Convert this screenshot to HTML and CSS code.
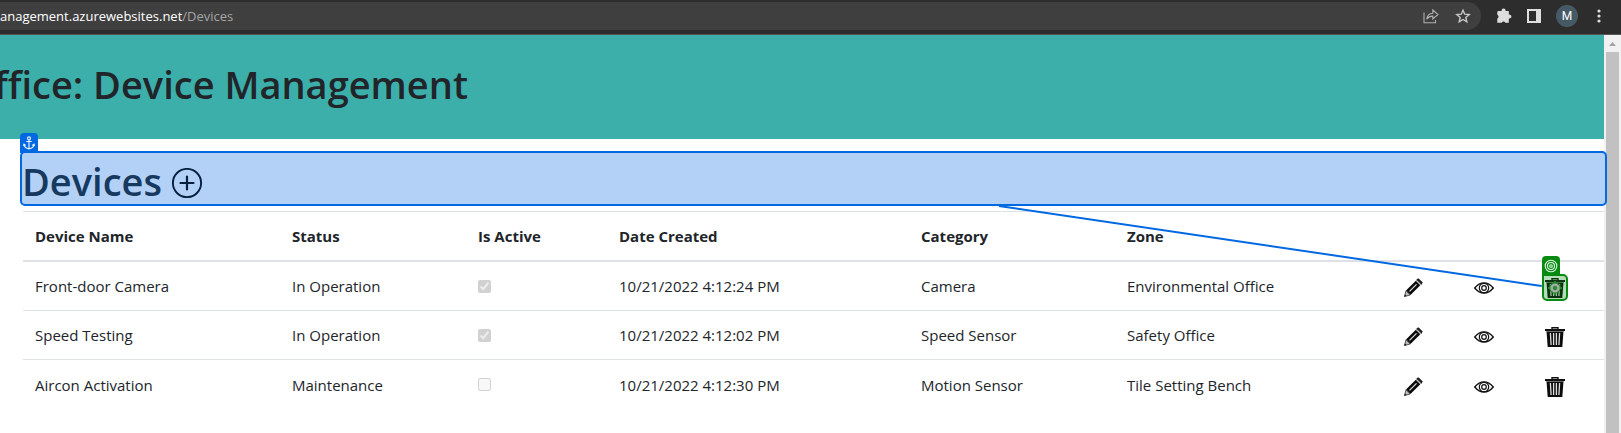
FILE: index.html
```html
<!DOCTYPE html>
<html lang="en">
<head>
<meta charset="utf-8">
<title>Device Management</title>
<link rel="stylesheet" href="styles.css">
</head>
<body>
<svg class="defs" aria-hidden="true">
  <symbol id="pencil" viewBox="0 0 20 20">
    <path d="M3 12.5 12.8 2.7l4.5 4.5L7.500 17z" fill="#0b0b0b"/>
    <path d="M13.600 1.900 15.400.8l3.800 3.800-1.100 1.800z" fill="#222" stroke="#111" stroke-linejoin="round"/>
    <path d="m13.900 2.600 3.500 3.500" stroke="#ccc" stroke-width="1"/>
    <path d="m6.500 13.300 7-7" stroke="#ddd" stroke-width="1.200"/>
    <path d="M3 12.800 1.500 18.500 7.200 17z" fill="#bbb" stroke="#333" stroke-width=".8"/>
    <path d="m1.300 18.700.6-2.300 1.700 1.700z" fill="#111"/>
  </symbol>
  <symbol id="eye" viewBox="0 0 20 20">
    <g fill="none" stroke="#111">
      <path d="M.7 10Q5 4.900 10 4.900T19.300 10Q15 15.100 10 15.100T.7 10z" stroke-width="1.400"/>
      <circle cx="10" cy="10" r="4.700" stroke-width="1.200"/>
      <circle cx="10" cy="10" r="2.300" stroke-width="1.200"/>
    </g>
  </symbol>
  <symbol id="trash" viewBox="0 0 20 20">
    <path d="M7 2V.8h6V2" fill="none" stroke="#111" stroke-width="1.400"/>
    <path d="M0 2h20v2H0z" fill="#111"/>
    <path d="M1.500 4h17l-1.200 16H2.700z" fill="#0b0b0b"/>
    <path d="M1.500 4.500h17" stroke="#888" stroke-width=".8"/>
    <path d="m5.400 6 .7 12M8.600 6v12M11.400 6v12M14.600 6l-.7 12" stroke="#ddd" stroke-width="1.300"/>
  </symbol>
</svg>

<header class="toolbar">
  <div class="omnibox">
    <span class="url">anagement.azurewebsites.net<span class="url-path">/Devices</span></span>
    <button class="tool" aria-label="Share">
      <svg width="16" height="16" viewBox="0 0 16 16" fill="none" stroke="#b0b0b0" stroke-width="1.100"><path d="M1 4.500v10.300h11.500V12M3.700 11.200C4.200 7.500 6.500 5.500 9.800 5.300V2L15 6.500 9.800 11V8.100C7.300 8 5.300 9 3.700 11.200z"/></svg>
    </button>
    <button class="tool" aria-label="Bookmark">
      <svg width="16" height="16" viewBox="0 0 16 16" fill="none" stroke="#c8c8c8" stroke-width="1.400"><path d="m8 2.200 1.700 4 4.500.4-3.400 2.900 1 4.300L8 11.500l-3.800 2.300 1-4.300L1.800 6.600l4.500-.4z"/></svg>
    </button>
  </div>
  <button class="tool" aria-label="Extensions">
    <svg width="16" height="16" viewBox="0 0 16 16" fill="#dedede"><path d="M2.500 3h3.200a2 2 0 1 1 3.800 0h3.300v3.600a2 2 0 1 1 0 3.800v4.300H9.300a2 2 0 0 0-3.600 0H1.300V10.500a2 2 0 0 0 0-3.700V4.200Q1.300 3 2.500 3z"/></svg>
  </button>
  <button class="tool" aria-label="Side panel">
    <svg width="14" height="14" viewBox="0 0 14 14"><path d="M0 0h14v14H0zM2 2v10h7V2z" fill="#dedede" fill-rule="evenodd"/></svg>
  </button>
  <button class="avatar" aria-label="Profile M">M</button>
  <button class="tool" aria-label="Menu">
    <svg width="4" height="14" viewBox="0 0 4 14" fill="#dedede"><circle cx="2" cy="2" r="1.600"/><circle cx="2" cy="7" r="1.600"/><circle cx="2" cy="12" r="1.600"/></svg>
  </button>
</header>

<div class="viewport">
  <main class="page">
    <div class="banner"><h1>ffice: Device Management</h1></div>
    <section class="devices">
      <div class="anchor-box">
        <span class="badge badge-anchor"><svg width="12" height="14" viewBox="0 0 12 14" fill="none" stroke="#e8f2ff" stroke-width="1.200"><circle cx="6" cy="2.300" r="1.500"/><path d="M6 3.800V13M3.200 5.500h5.600M1 8.300c.2 2.700 2 4.200 5 4.500 3-.3 4.800-1.800 5-4.500M.4 10 1 8.200l1.700 1.200M11.600 10 11 8.200 9.300 9.400"/></svg></span>
        <h2>Devices</h2>
        <button class="icon-button" aria-label="Add device"><svg width="30" height="30" viewBox="0 0 30 30" fill="none" stroke="#05203f"><circle cx="15" cy="15" r="14.100" stroke-width="1.900"/><path d="M15 8.500v13M8.500 15h13" stroke-width="2.200" stroke-linecap="round"/></svg></button>
      </div>
      <table>
        <colgroup><col class="c-name"><col class="c-status"><col class="c-active"><col class="c-date"><col class="c-category"><col class="c-zone"><col class="c-action"><col class="c-action"><col class="c-action"></colgroup>
        <thead>
          <tr><th>Device Name</th><th>Status</th><th>Is Active</th><th>Date Created</th><th>Category</th><th>Zone</th><th></th><th></th><th></th></tr>
        </thead>
        <tbody>
          <tr>
            <td>Front-door Camera</td><td>In Operation</td><td><input type="checkbox" aria-label="Front-door Camera is active" checked disabled></td><td>10/21/2022 4:12:24 PM</td><td>Camera</td><td>Environmental Office</td>
            <td class="action"><button class="icon-button" aria-label="Edit"><svg width="20" height="20"><use href="#pencil"/></svg></button></td>
            <td class="action"><button class="icon-button" aria-label="View"><svg width="20" height="20"><use href="#eye"/></svg></button></td>
            <td class="action"><button class="icon-button" aria-label="Delete"><svg width="20" height="20"><use href="#trash"/></svg>
              <span class="target-box"><span class="badge badge-target"><svg width="14" height="14" viewBox="0 0 14 14" fill="none" stroke="#dff5df" stroke-width="1.100"><circle cx="7" cy="7" r="5.800"/><circle cx="7" cy="7" r="3.500"/><circle cx="7" cy="7" r="1.300"/></svg></span>
              <svg width="14" height="14" viewBox="0 0 14 14" fill="none"><path d="M7 0v14M0 7h14" stroke="#1f8a2a" stroke-width="2"/><circle cx="7" cy="7" r="5.200" stroke="#1f8a2a" stroke-width="1.200"/><circle cx="7" cy="7" r="3.400" fill="#2f8a3a" stroke="#a3aea3" stroke-width="2.400"/></svg></span></button></td>
          </tr>
          <tr>
            <td>Speed Testing</td><td>In Operation</td><td><input type="checkbox" aria-label="Speed Testing is active" checked disabled></td><td>10/21/2022 4:12:02 PM</td><td>Speed Sensor</td><td>Safety Office</td>
            <td class="action"><button class="icon-button" aria-label="Edit"><svg width="20" height="20"><use href="#pencil"/></svg></button></td>
            <td class="action"><button class="icon-button" aria-label="View"><svg width="20" height="20"><use href="#eye"/></svg></button></td>
            <td class="action"><button class="icon-button" aria-label="Delete"><svg width="20" height="20"><use href="#trash"/></svg></button></td>
          </tr>
          <tr>
            <td>Aircon Activation</td><td>Maintenance</td><td><input type="checkbox" aria-label="Aircon Activation is active" disabled></td><td>10/21/2022 4:12:30 PM</td><td>Motion Sensor</td><td>Tile Setting Bench</td>
            <td class="action"><button class="icon-button" aria-label="Edit"><svg width="20" height="20"><use href="#pencil"/></svg></button></td>
            <td class="action"><button class="icon-button" aria-label="View"><svg width="20" height="20"><use href="#eye"/></svg></button></td>
            <td class="action"><button class="icon-button" aria-label="Delete"><svg width="20" height="20"><use href="#trash"/></svg></button></td>
          </tr>
        </tbody>
      </table>
      <svg class="connector" viewBox="0 0 100 100" preserveAspectRatio="none" aria-hidden="true"><path d="M0 0 100 100" stroke="#0068e0" stroke-width="2" vector-effect="non-scaling-stroke"/></svg>
    </section>
  </main>
  <div class="scrollbar" aria-hidden="true">
    <svg width="7" height="4" viewBox="0 0 7 4"><path d="M0 4 3.500 0 7 4z" fill="#a3a3a3"/></svg>
    <div class="thumb"></div>
  </div>
</div>
</body>
</html>
```
FILE: styles.css
```css
* { box-sizing: border-box; }

body {
  margin: 0;
  min-height: 100vh;
  display: flex;
  flex-direction: column;
  overflow: hidden;
  background: #fff;
  color: #212529;
  font: 15px/24px "Open Sans", "Noto Sans", sans-serif;
}

.defs { display: none; }

button {
  padding: 0;
  border: 0;
  background: none;
  color: inherit;
  font: inherit;
}

/* Browser toolbar */
.toolbar {
  display: flex;
  align-items: center;
  gap: 15px;
  height: 35px;
  padding: 2px 20px 4px 0;
  background: #2d2d2d;
  border-bottom: 1px solid #555;
}

.omnibox {
  flex: 1;
  display: flex;
  align-items: center;
  gap: 16px;
  height: 28px;
  padding-right: 10px;
  background: #3f3f3f;
  border-radius: 0 14px 14px 0;
}

.url {
  flex: 1;
  color: #fff;
  font-size: 13px;
}

.url-path { color: #a5a5a5; }

.tool { display: flex; }

.avatar {
  width: 22px;
  height: 22px;
  border-radius: 50%;
  background: #465a66;
  color: #fff;
  font: 12px/22px Roboto, sans-serif;
  margin-right: 4px;
}

/* Page */
.viewport {
  flex: 1;
  display: flex;
}

.page {
  flex: 1;
  min-width: 0;
}

/* The title runs off the left edge of the window */
.banner {
  height: 104px;
  margin-left: -6px;
  padding: 25px 0;
  background: #3cafab;
}

h1, h2 {
  margin: 0;
  font-size: 38px;
  font-weight: 600;
  line-height: 48px;
  white-space: nowrap;
}

.devices {
  position: relative;
  padding: 12px 0 0 20px;
}

.anchor-box {
  position: relative;
  z-index: 1;
  display: flex;
  align-items: center;
  gap: 10px;
  height: 55px;
  margin: 0 -3px 5px 0;
  padding: 8px 0 0;
  background: #b3d1f6;
  border: 2px solid #0068e0;
  border-radius: 5px;
  color: #17395f;
}

.anchor-box h2 { padding-bottom: 4px; }

.badge {
  position: absolute;
  left: -2px;
  bottom: 100%;
  display: flex;
  align-items: center;
  justify-content: center;
  width: 18px;
  height: 20px;
  border-radius: 4px 4px 0 0;
}

.badge-anchor { background: #0068e0; }
.badge-target { background: #078a12; }

.icon-button {
  position: relative;
  display: flex;
}

table {
  width: calc(100% - 3px);
  margin-left: 3px;
  table-layout: fixed;
  border-collapse: separate;
  border-spacing: 0;
}

.c-name { width: 257px; }
.c-status { width: 186px; }
.c-active { width: 141px; }
.c-date { width: 302px; }
.c-category { width: 206px; }
.c-zone { width: 276px; }
.c-action { width: 71px; }

th, td {
  height: 49px;
  padding: 12px;
  text-align: left;
  white-space: nowrap;
}

th {
  height: 51px;
  border-top: 1px solid #dee2e6;
  border-bottom: 2px solid #dee2e6;
  font-weight: 700;
}

td { border-bottom: 1px solid #dee2e6; }
td.action { padding: 16px 12px 12px; }
tr:last-child td { border-bottom: 0; }

input[type="checkbox"] {
  display: block;
  width: 13px;
  height: 13px;
  margin: 0;
}

/* Annotation over the first delete button */
.target-box {
  position: absolute;
  top: -4px;
  left: -3px;
  display: flex;
  align-items: center;
  justify-content: center;
  width: 26px;
  height: 27px;
  background: rgba(7, 138, 18, 0.3);
  border: 2px solid #078a12;
  border-radius: 0 5px 5px 5px;
}

.connector {
  position: absolute;
  top: 67px;
  left: 62.3%;
  width: calc(37.7% - 62px);
  height: 80px;
  overflow: visible;
}

/* Scrollbar */
.scrollbar {
  width: 17px;
  display: flex;
  flex-direction: column;
  align-items: center;
  padding-top: 7px;
  gap: 6px;
  background: #f1f1f1;
}

.thumb {
  flex: 1;
  width: 13px;
  background: #c1c1c1;
}
```
